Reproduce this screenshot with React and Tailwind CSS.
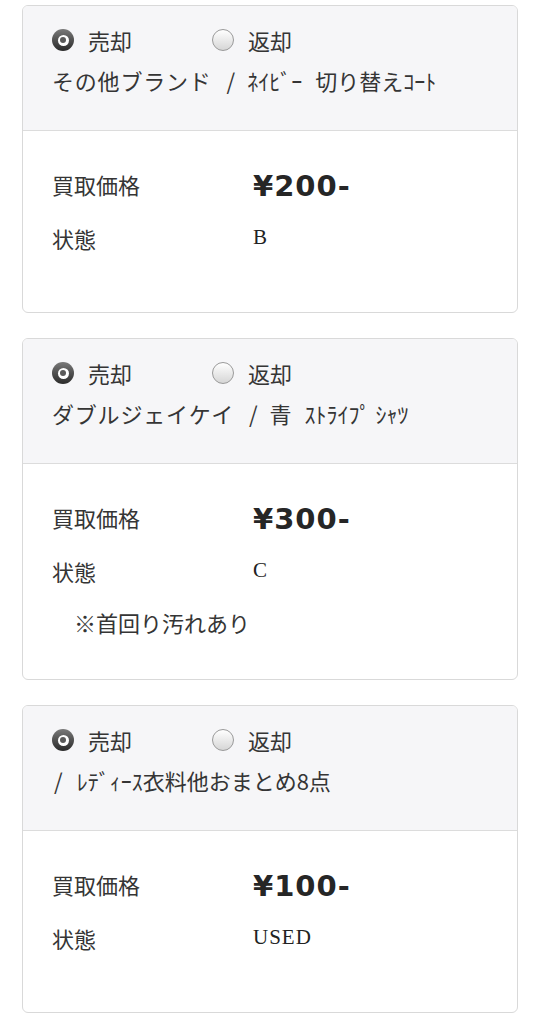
import React from 'react';

const items = [
  { name: ['その他ブランド', 'ﾈｲﾋﾞｰ', '切り替えｺｰﾄ'], price: '¥200-', cond: 'B', note: '' },
  { name: ['ダブルジェイケイ', '青', 'ｽﾄﾗｲﾌﾟ ｼｬﾂ'], price: '¥300-', cond: 'C', note: '※首回り汚れあり' },
  { name: ['', 'ﾚﾃﾞｨｰｽ衣料他おまとめ8点'], price: '¥100-', cond: 'USED', note: '' },
];

function Radio({ checked, label }) {
  return (
    <div className="flex items-center">
      {checked ? (
        <span className="flex h-[22px] w-[22px] items-center justify-center rounded-full bg-gradient-to-b from-[#7a7a7a] to-[#2c2c2c]">
          <span className="flex h-[11px] w-[11px] items-center justify-center rounded-full bg-white">
            <span className="h-[6px] w-[6px] rounded-full bg-[#5a5a5a]" />
          </span>
        </span>
      ) : (
        <span className="h-[22px] w-[22px] rounded-full border border-[#9a9a9a] bg-gradient-to-b from-white to-[#d6d6d6]" />
      )}
      <span className="ml-[14px]">{label}</span>
    </div>
  );
}

function Name({ parts }) {
  const [brand, ...rest] = parts;
  return (
    <div className="mt-[7px] flex h-[30px] items-center whitespace-pre">
      {brand && <span className="tracking-[0.8px]">{brand}</span>}
      <span className={brand ? 'ml-[15px] mr-[12px]' : 'ml-[2px] mr-[14px]'}>/</span>
      {rest.map((p, i) => (
        <span key={i} className={i > 0 ? 'ml-[13px]' : ''}>{p}</span>
      ))}
    </div>
  );
}

function Card({ item }) {
  return (
    <div className="overflow-hidden rounded-[6px] border border-[#d9d9d9] bg-white">
      <div className="h-[125px] border-b border-[#dcdcdc] bg-[#f6f6f8] px-[29px] pt-[16px]">
        <div className="flex h-9 items-center gap-[38px]">
          <div className="w-[122px]"><Radio checked label="売却" /></div>
          <Radio checked={false} label="返却" />
        </div>
        <Name parts={item.name} />
      </div>
      <div className={item.note ? 'px-[29px] pt-[35px] pb-[39px]' : 'px-[29px] pt-[35px] pb-[56px]'}>
        <div className="flex h-9 items-center">
          <div className="w-[201px]">買取価格</div>
          <div
            className="pt-[4px] text-[29px] font-bold leading-none tracking-[1px] text-[#262626]"
            style={{ fontFamily: '"DejaVu Sans", sans-serif' }}
          >
            {item.price}
          </div>
        </div>
        <div className="mt-[18px] flex h-9 items-center">
          <div className="w-[201px]">状態</div>
          <div
            className="text-[21px] tracking-[1px] text-[#222]"
            style={{ fontFamily: '"Liberation Serif", serif' }}
          >
            {item.cond}
          </div>
        </div>
        {item.note && (
          <div className="mt-[15px] flex h-9 items-center pl-[22px]">{item.note}</div>
        )}
      </div>
    </div>
  );
}

export default function App() {
  return (
    <div
      className="flex min-h-[1024px] flex-col gap-[25px] bg-white px-[22px] pt-[5px] text-[22px] text-[#353535]"
      style={{ fontFamily: '"Noto Sans CJK JP", "Noto Sans", sans-serif' }}
    >
      {items.map((item, i) => (
        <Card key={i} item={item} />
      ))}
    </div>
  );
}
